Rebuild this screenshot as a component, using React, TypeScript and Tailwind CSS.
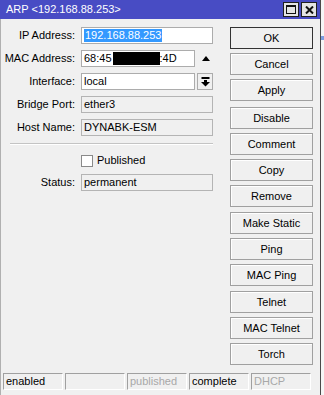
import React from 'react'

const font = "font-['Liberation_Sans',Arial,sans-serif]"

function Field({ label, children }: { label: string; children: React.ReactNode }) {
  return (
    <div className="flex items-center h-[17px]">
      <div className="w-[75px] text-right pr-[1px] whitespace-nowrap">{label}</div>
      <div className="ml-[5px] flex items-center flex-1">{children}</div>
    </div>
  )
}

function Box({ value, readOnly = false, className = '' }: { value?: React.ReactNode; readOnly?: boolean; className?: string }) {
  return (
    <div
      className={`h-[17px] border flex items-center pl-[2px] whitespace-nowrap overflow-hidden ${
        readOnly ? 'bg-[#f0f0f0] border-[#b4b4b4]' : 'bg-white border-[#acacac]'
      } ${className}`}
    >
      {value}
    </div>
  )
}

function Btn({ label, primary = false, className = '' }: { label: string; primary?: boolean; className?: string }) {
  return (
    <div
      className={`h-[22px] w-[83px] flex items-center justify-center border bg-[#f0f0f0] ${
        primary ? 'border-[#333333]' : 'border-[#a0a0a0] shadow-[inset_1px_1px_0_#ffffff]'
      } ${className}`}
    >
      {label}
    </div>
  )
}

function Cell({ text, muted = false }: { text?: string; muted?: boolean }) {
  return (
    <div
      className={`w-[60px] h-[17px] border-t border-l border-[#a0a0a0] border-r border-b border-r-white border-b-white flex items-center pl-[2px] ${
        muted ? 'text-[#a8a8a8]' : 'text-black'
      }`}
    >
      {text}
    </div>
  )
}

export default function App() {
  const groupA = ['Cancel', 'Apply']
  // a few buttons sit one pixel lower than the 26px rhythm in the original
  const groupB: [string, string][] = [
    ['Disable', ''],
    ['Comment', ''],
    ['Copy', ''],
    ['Remove', ''],
    ['Make Static', 'mt-[1px]'],
    ['Ping', ''],
    ['MAC Ping', ''],
    ['Telnet', 'mt-[1px]'],
    ['MAC Telnet', ''],
    ['Torch', ''],
  ]

  return (
    <div className={`w-[324px] h-[395px] flex overflow-hidden bg-[#f0f0f0] text-[11px] text-black ${font}`}>
      <div className="w-[321px] flex flex-col border-r border-[#4a4a4a]">
        {/* title bar */}
        <div className="h-[19px] bg-[#484cc4] flex items-center pl-[6px] pr-[3px]">
          <span className="text-white text-[11px] leading-none">ARP &lt;192.168.88.253&gt;</span>
          <div className="ml-auto flex gap-[2px]">
            <div className="w-[16px] h-[15px] bg-[#e4e4e4] border border-[#202020] flex items-center justify-center">
              <svg width="10" height="9" viewBox="0 0 10 9">
                <rect x="0.5" y="0.5" width="9" height="8" fill="none" stroke="#111" strokeWidth="1" />
                <rect x="0" y="0" width="10" height="2" fill="#111" />
              </svg>
            </div>
            <div className="w-[16px] h-[15px] bg-[#e4e4e4] border border-[#202020] flex items-center justify-center">
              <svg width="9" height="8" viewBox="0 0 9 8">
                <path d="M1 0.5 L8 7.5 M8 0.5 L1 7.5" stroke="#111" strokeWidth="2" />
              </svg>
            </div>
          </div>
        </div>

        {/* body */}
        <div className="flex-1 flex flex-col border-l border-[#b0b0b0]">
          <div className="flex pt-[8px]">
            {/* form */}
            <div className="w-[212px] flex flex-col">
              <div className="flex flex-col gap-[6px]">
                <Field label="IP Address:">
                  <Box
                    className="w-[132px]"
                    value={<span className="bg-[#3399ff] text-white leading-[13px] px-[1px]">192.168.88.253</span>}
                  />
                </Field>
                <Field label="MAC Address:">
                  <Box
                    className="w-[114px]"
                    value={
                      <>
                        <span>68:45</span>
                        <span className="inline-block w-[47px] h-[13px] bg-black ml-[1px]" />
                        <span>:4D</span>
                      </>
                    }
                  />
                  <svg className="ml-[7px]" width="8" height="5" viewBox="0 0 8 5">
                    <polygon points="0,5 8,5 4,0" fill="#000" />
                  </svg>
                </Field>
                <Field label="Interface:">
                  <Box className="w-[114px]" value="local" />
                  <div className="ml-[2px] w-[16px] h-[17px] border border-[#acacac] bg-[#f0f0f0] flex items-center justify-center">
                    <svg width="9" height="10" viewBox="0 0 9 10">
                      <rect x="0.5" y="0" width="8" height="2" fill="#000" />
                      <rect x="3" y="3" width="3" height="2" fill="#000" />
                      <polygon points="0,5 9,5 4.5,9.5" fill="#000" />
                    </svg>
                  </div>
                </Field>
                <Field label="Bridge Port:">
                  <Box readOnly className="w-[132px]" value="ether3" />
                </Field>
                <Field label="Host Name:">
                  <Box readOnly className="w-[132px]" value="DYNABK-ESM" />
                </Field>
              </div>

              <div className="mt-[7px] ml-[9px] border-t border-[#c4c4c4] border-b border-b-white" />

              <div className="mt-[9px] flex items-center pl-[80px] h-[13px]">
                <div className="w-[12px] h-[12px] bg-white border border-[#8a8a8a]" />
                <span className="ml-[4px]">Published</span>
              </div>

              <div className="mt-[7px]">
                <Field label="Status:">
                  <Box readOnly className="w-[132px]" value="permanent" />
                </Field>
              </div>
            </div>

            {/* buttons */}
            <div className="ml-[17px] flex flex-col">
              <div className="flex flex-col gap-[4px]">
                <Btn label="OK" primary />
                {groupA.map((b) => (
                  <Btn key={b} label={b} />
                ))}
              </div>
              <div className="mt-[6px] flex flex-col gap-[4px]">
                {groupB.map(([b, extra]) => (
                  <Btn key={b} label={b} className={extra} />
                ))}
              </div>
            </div>
          </div>

          {/* status bar */}
          <div className="mt-[8px] pl-[2px] flex gap-[2px]">
            <Cell text="enabled" />
            <Cell />
            <Cell text="published" muted />
            <Cell text="complete" />
            <Cell text="DHCP" muted />
          </div>
        </div>
      </div>

      <div className="flex-1 flex flex-col bg-[#f6f6f6]">
        <div className="h-[36px]" />
        <div className="h-[4px] bg-[#7d9de0]" />
      </div>
    </div>
  )
}
